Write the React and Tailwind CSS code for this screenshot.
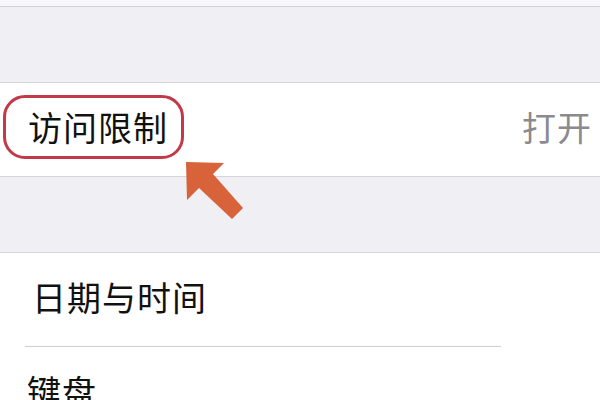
export default function App() {
  const font = { fontFamily: '"Noto Sans CJK SC", "Noto Sans", sans-serif' };

  return (
    <div className="relative w-[600px] h-[400px] overflow-hidden bg-[#efeff4]" style={font}>
      <div className="h-[7px] bg-[#f8f8fa] border-b border-[#d2d2d6]"></div>
      <div className="h-[75px]"></div>

      {/* 访问限制 row */}
      <div className="relative h-[95px] bg-white border-y border-[#d6d6da] flex items-center justify-between pl-[28px] pr-[8px] pb-[5px]">
        <span className="text-[34px] leading-none text-[#111] tracking-[1px]">访问限制</span>
        <span className="text-[34px] leading-none text-[#8a8a8f] tracking-[1px]">打开</span>
        <div className="absolute left-[3px] top-[12px] w-[181px] h-[64px] rounded-[22px] border-[3px] border-[#c23a47]"></div>
      </div>

      <div className="h-[75px]"></div>

      <div className="bg-white border-t border-[#d6d6da]">
        <div className="h-[93px] flex items-center pl-[32px] pb-[6px]">
          <span className="text-[34px] leading-none text-[#111] tracking-[1px]">日期与时间</span>
        </div>
        <div className="ml-[25px] w-[476px] h-px bg-[#cfcfd3]"></div>
        <div className="h-[60px] pl-[27px] pt-[27px]">
          <span className="text-[34px] leading-none text-[#111] tracking-[1px]">键盘</span>
        </div>
      </div>

      {/* annotation arrow */}
      <svg className="absolute left-[184px] top-[160px]" width="62" height="62" viewBox="0 0 62 62">
        <polygon points="2,2 40,3 29,14 59,48 48,59 15,28 3,40" fill="#d8623a" />
      </svg>
    </div>
  );
}
